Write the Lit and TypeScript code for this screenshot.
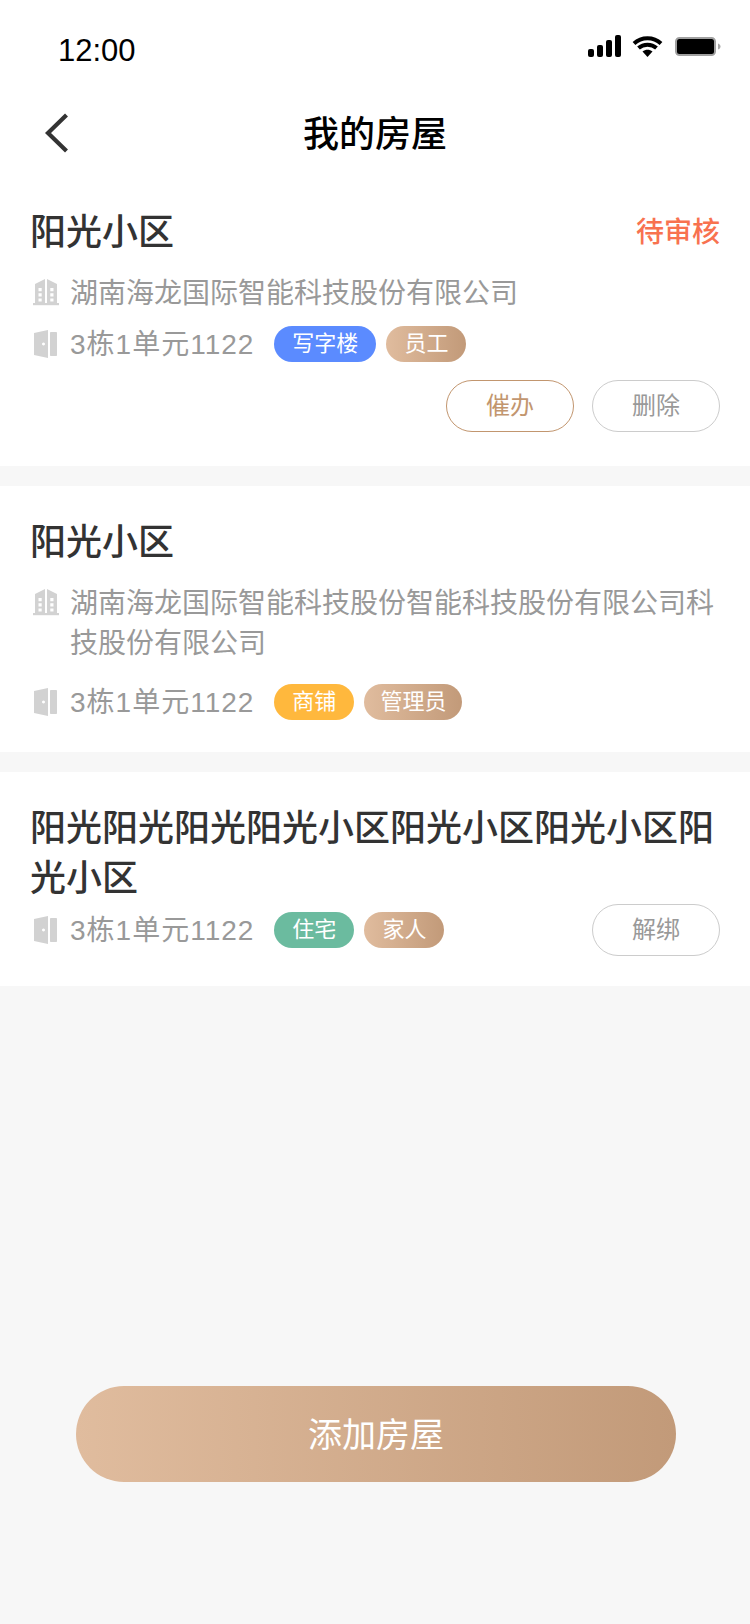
import { LitElement, html, css, svg } from "lit";
import { customElement } from "lit/decorators.js";

const buildingIcon = html`<svg class="ic" viewBox="0 0 28 28" aria-hidden="true">
  <path fill="#d2d2d2" fill-rule="evenodd" d="M3 25.500V6L13 1V25.500ZM15 1L25 6V25.500H15ZM6.500 10v3.200h3.200v-3.200ZM6.500 15.200v3.200h3.200v-3.200ZM6.500 20.400v3.200h3.200v-3.200ZM18.300 10v3.200h3.200v-3.200ZM18.300 15.200v3.200h3.200v-3.200ZM18.300 20.400v3.200h3.200v-3.200Z"/>
  <rect x="1" y="25" width="26" height="2.200" fill="#d2d2d2"/>
</svg>`;

const doorIcon = html`<svg class="ic" viewBox="0 0 28 28" aria-hidden="true">
  <path fill="#d2d2d2" fill-rule="evenodd" d="M2 3L16 0V28L2 25ZM11.500 12.500a1.500 1.500 0 1 0 0.010 0Z"/>
  <rect x="18" y="2" width="7" height="24" rx="0.800" fill="#d2d2d2"/>
</svg>`;

interface Tag { text: string; cls: string }

@customElement("house-card")
class HouseCard extends LitElement {
  static properties = {
    name: { type: String },
    status: { type: String },
    company: { type: String },
    unit: { type: String },
    tags: { attribute: false },
    inlineAction: { type: String },
    wrapped: { type: Boolean },
  };
  name = "";
  status = "";
  company = "";
  unit = "3栋1单元1122";
  tags: Tag[] = [];
  inlineAction = "";
  wrapped = false;

  static styles = css`
    :host {
      display: block;
      background: #fff;
      padding: 32px 30px 30px;
      font-family: "Liberation Sans", "Noto Sans CJK SC", sans-serif;
    }
    .head { display: flex; justify-content: space-between; align-items: flex-start; }
    .name { font-size: 36px; line-height: 50px; color: #333; flex: 1; font-weight: 500; }
    .status { font-size: 28px; line-height: 50px; color: #f8724f; font-weight: 500; }
    .info {
      display: flex;
      gap: 10px;
      margin-top: 14px;
      font-size: 28px;
      line-height: 40px;
      color: #999;
    }
    .ic { width: 28px; height: 28px; flex: none; margin: 6px 0 0 2px; }
    .text { flex: 1; padding-top: 2px; margin-bottom: -2px; }
    .unit-row {
      display: flex;
      align-items: center;
      font-size: 28px;
      line-height: 38px;
      color: #999;
    }
    .unit-row.after { margin-top: 12px; }
    .unit-row.after.wide { margin-top: 20px; }
    .unit-row .ic { margin: 0 10px 0 2px; }
    .tag {
      font-size: 22px;
      line-height: 36px;
      height: 36px;
      padding: 0 18px;
      border-radius: 18px;
      color: #fff;
      margin-left: 10px;
      white-space: nowrap;
    }
    .unit { margin-right: 10px; letter-spacing: 1px; padding-top: 2px; }
    .blue { background: #5b8bff; }
    .yellow { background: #ffb83d; }
    .green { background: #6bbb9f; }
    .gold { background: linear-gradient(90deg, #e0bc9e, #c29a79); }
    .tight { padding: 0 16px; }
    .btn {
      box-sizing: border-box;
      width: 128px;
      height: 52px;
      border-radius: 26px;
      border: 1px solid #ccc;
      color: #999;
      font-size: 24px;
      line-height: 50px;
      text-align: center;
    }
    .spacer { flex: 1; }
  `;

  render() {
    return html`
      <div class="head">
        <div class="name">${this.name}</div>
        ${this.status ? html`<div class="status">${this.status}</div>` : ""}
      </div>
      ${this.company
        ? html`<div class="info">${buildingIcon}<div class="text">${this.company}</div></div>`
        : ""}
      <div class="unit-row ${this.company ? "after" : ""} ${this.wrapped ? "wide" : ""}">
        ${doorIcon}<span class="unit">${this.unit}</span>
        ${this.tags.map((t) => html`<span class="tag ${t.cls}">${t.text}</span>`)}
        ${this.inlineAction
          ? html`<span class="spacer"></span><span class="btn">${this.inlineAction}</span>`
          : ""}
      </div>
      <slot></slot>
    `;
  }
}

@customElement("app-root")
class AppRoot extends LitElement {
  static styles = css`
    :host {
      display: flex;
      flex-direction: column;
      min-height: 1624px;
      background: #f7f7f7;
      font-family: "Liberation Sans", "Noto Sans CJK SC", sans-serif;
    }
    .top { background: #fff; }
    .status {
      height: 88px;
      display: flex;
      justify-content: space-between;
      align-items: center;
      padding: 0 29px 0 58px;
      box-sizing: border-box;
    }
    .time { font-size: 31px; color: #000; padding-top: 14px; }
    .sys { display: flex; align-items: center; gap: 10px; margin-top: 4px; }
    .battery { margin-left: 2px; }
    .nav {
      height: 88px;
      box-sizing: border-box;
      padding-bottom: 2px;
      display: flex;
      align-items: center;
      justify-content: center;
      position: relative;
      font-size: 36px;
      font-weight: 500;
      color: #000;
    }
    .back { position: absolute; left: 44px; top: 25px; width: 26px; height: 40px; }
    .list { display: flex; flex-direction: column; gap: 20px; }
    .actions { display: flex; justify-content: flex-end; gap: 18px; margin: 16px 0 4px; }
    .btn {
      box-sizing: border-box;
      width: 128px;
      height: 52px;
      border-radius: 26px;
      border: 1px solid #ccc;
      color: #999;
      font-size: 24px;
      line-height: 50px;
      text-align: center;
    }
    .btn.primary { border-color: #c2966f; color: #c2966f; }
    .add {
      margin: auto 74px 142px 76px;
      height: 96px;
      border-radius: 48px;
      background: linear-gradient(90deg, #e0bc9e, #c29a79);
      color: #fff;
      font-size: 34px;
      line-height: 98px;
      text-align: center;
    }
  `;

  render() {
    return html`
      <div class="top">
        <div class="status">
          <span class="time">12:00</span>
          <span class="sys">
            <svg width="34" height="22" viewBox="0 0 34 22" aria-hidden="true">
              <rect x="0" y="14" width="6" height="8" rx="2" fill="#000"/>
              <rect x="9" y="10" width="6" height="12" rx="2" fill="#000"/>
              <rect x="18" y="5" width="6" height="17" rx="2" fill="#000"/>
              <rect x="27" y="0" width="6" height="22" rx="2" fill="#000"/>
            </svg>
            <svg width="31" height="22" viewBox="0 0 31 22" aria-hidden="true">
              ${svg`<path d="M2 8.500C9.500 1.500 21.500 1.500 29 8.500M6.500 13C11.500 8.500 19.500 8.500 24.500 13" fill="none" stroke="#000" stroke-width="4"/>
              <path d="M10.500 16.600C13.500 14 17.500 14 20.500 16.600L15.500 22Z" fill="#000"/>`}
            </svg>
            <svg class="battery" width="46" height="19" viewBox="0 0 46 19" aria-hidden="true">
              <rect x="1" y="1" width="39" height="17" rx="3.500" fill="#000" stroke="#a0a0a0" stroke-width="2"/>
              <path d="M43 6.500c1.500 .5 2.500 1.500 2.500 3s-1 2.500-2.500 3Z" fill="#a8a8a8"/>
            </svg>
          </span>
        </div>
        <div class="nav">
          <svg class="back" viewBox="0 0 26 40" aria-hidden="true">
            <path d="M22.500 2L4 20L22.500 38" fill="none" stroke="#333" stroke-width="4.200"/>
          </svg>
          我的房屋
        </div>
      </div>
      <div class="list">
        <house-card
          name="阳光小区"
          status="待审核"
          company="湖南海龙国际智能科技股份有限公司"
          .tags=${[{ text: "写字楼", cls: "blue" }, { text: "员工", cls: "gold" }]}
        >
          <div class="actions">
            <span class="btn primary">催办</span>
            <span class="btn">删除</span>
          </div>
        </house-card>
        <house-card
          name="阳光小区"
          wrapped
          company="湖南海龙国际智能科技股份智能科技股份有限公司科技股份有限公司"
          .tags=${[{ text: "商铺", cls: "yellow" }, { text: "管理员", cls: "gold tight" }]}
        ></house-card>
        <house-card
          name="阳光阳光阳光阳光小区阳光小区阳光小区阳光小区"
          inlineAction="解绑"
          .tags=${[{ text: "住宅", cls: "green" }, { text: "家人", cls: "gold" }]}
        ></house-card>
      </div>
      <div class="add">添加房屋</div>
    `;
  }
}
